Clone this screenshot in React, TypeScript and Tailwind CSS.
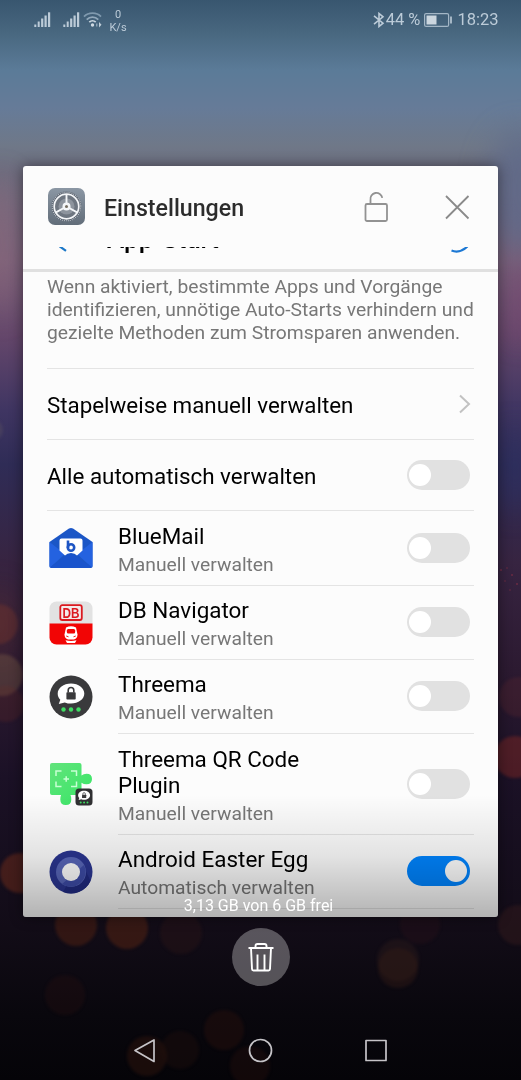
import React from "react";

const Wallpaper = () => (
    <svg
        className="absolute inset-0"
        width="521"
        height="1080"
        viewBox="0 0 521 1080"
    >
        <defs>
            <linearGradient id="sky" x1="0" y1="0" x2="0" y2="1">
                <stop offset="0" stopColor="#38566f" />
                <stop offset="0.03" stopColor="#48677f" />
                <stop offset="0.065" stopColor="#5b7b98" />
                <stop offset="0.1" stopColor="#667b98" />
                <stop offset="0.135" stopColor="#6f7888" />
                <stop offset="0.16" stopColor="#6d6c7e" />
                <stop offset="0.24" stopColor="#77617a" />
                <stop offset="0.31" stopColor="#65476b" />
                <stop offset="0.38" stopColor="#3f3562" />
                <stop offset="0.43" stopColor="#2f2c56" />
                <stop offset="0.52" stopColor="#372441" />
                <stop offset="0.62" stopColor="#2c1a31" />
                <stop offset="0.72" stopColor="#1b1126" />
                <stop offset="0.86" stopColor="#120c17" />
                <stop offset="0.94" stopColor="#09070d" />
                <stop offset="1" stopColor="#050408" />
            </linearGradient>
            <filter id="soft" x="-30%" y="-30%" width="160%" height="160%" colorInterpolationFilters="sRGB">
                <feGaussianBlur stdDeviation="1.8" />
            </filter>
            <filter id="haze" x="-100%" y="-100%" width="300%" height="300%" colorInterpolationFilters="sRGB">
                <feGaussianBlur stdDeviation="14" />
            </filter>
        </defs>
        <rect width="521" height="1080" fill="url(#sky)" />
        <g filter="url(#haze)">
            <ellipse cx="0" cy="245" rx="14" ry="70" fill="#96697a" opacity="0.5" />
            <ellipse cx="521" cy="190" rx="34" ry="60" fill="#5c6a8c" opacity="0.7" />
            <ellipse cx="521" cy="300" rx="14" ry="40" fill="#7c4470" opacity="0.5" />
            <ellipse cx="515" cy="470" rx="20" ry="40" fill="#2d3062" opacity="0.6" />
            <ellipse cx="0" cy="625" rx="14" ry="40" fill="#7a3a2c" opacity="0.3" />
        </g>
        <g filter="url(#soft)">
            <circle cx="-8" cy="430" r="11" fill="#5a5060" opacity="0.4" />
            <circle cx="-2" cy="624" r="20" fill="#8a3a28" opacity="0.3" />
            <circle cx="2" cy="675" r="21" fill="#806048" opacity="0.38" />
            <circle cx="6" cy="704" r="18" fill="#6c2a24" opacity="0.25" />
            <circle cx="20" cy="873" r="20" fill="#8a3519" opacity="0.4" />
            <circle cx="519" cy="697" r="20" fill="#6a2a30" opacity="0.25" />
            <circle cx="515" cy="757" r="21" fill="#8f2a24" opacity="0.42" />
            <circle cx="518" cy="925" r="20" fill="#3c1e1d" opacity="0.4" />
            <circle cx="76" cy="925" r="21" fill="#5f2511" opacity="0.42" />
            <circle cx="127" cy="928" r="21" fill="#5f2711" opacity="0.46" />
            <circle cx="181" cy="933" r="21" fill="#301618" opacity="0.35" />
            <circle cx="420" cy="924" r="20" fill="#2c1219" opacity="0.35" />
            <circle cx="398" cy="960" r="21" fill="#34201c" opacity="0.35" />
            <circle cx="398" cy="968" r="20" fill="#3c2018" opacity="0.35" />
            <circle cx="65" cy="995" r="20" fill="#2a1210" opacity="0.3" />
            <circle cx="224" cy="1030" r="20" fill="#2c110d" opacity="0.4" />
            <circle cx="147" cy="1056" r="20" fill="#34160d" opacity="0.45" />
            <circle cx="180" cy="1050" r="19" fill="#20100c" opacity="0.4" />
            <circle cx="250" cy="1066" r="20" fill="#26100c" opacity="0.4" />
        </g>
        <g fill="#a13548" opacity="0.5">
            <circle cx="501" cy="570" r="1" />
            <circle cx="507" cy="568" r="0.8" />
            <circle cx="512" cy="575" r="1" />
            <circle cx="505" cy="581" r="0.8" />
            <circle cx="517" cy="584" r="1" />
            <circle cx="510" cy="590" r="0.8" />
        </g>
    </svg>
);

const Signal = () => (
    <svg width="18" height="16" viewBox="0 0 18 16" fill="#bccbd8">
        <rect x="0.3" y="12.5" width="2" height="2.5" />
        <rect x="3.7" y="9.5" width="2" height="5.5" />
        <rect x="7.1" y="6.5" width="2.2" height="8.5" />
        <rect x="10.5" y="3.5" width="2.2" height="11.5" />
        <rect x="14" y="0.3" width="2.2" height="14.7" />
    </svg>
);

const Wifi = () => (
    <svg width="20" height="16" viewBox="0 0 20 16" fill="none" strokeWidth="1.8">
        <path d="M1 4.6C5.5 0 13.5 0 18 4.6" stroke="#7f99ae" />
        <path d="M3.7 7.6C7 4.3 12 4.3 15.3 7.6" stroke="#91a8bb" />
        <path d="M6.3 10.2C8.2 8.3 10.8 8.3 12.7 10.2" stroke="#c9d5df" />
        <circle cx="9.5" cy="13" r="1.7" fill="#d0dae3" />
        <path d="M13.8 11.5v3" stroke="#9db1c2" strokeWidth="1.2" />
        <path d="M16 10l2.5 2.7-2.5 2.7z" fill="#c0ced9" />
    </svg>
);

const StatusBar = () => (
    <div className="flex h-10 items-center justify-between pl-[34px] pr-[22.5px] text-[#bccbd8]">
        <div className="flex items-center">
            <Signal />
            <div className="ml-[11px]">
                <Signal />
            </div>
            <div className="ml-[2px]">
                <Wifi />
            </div>
            <div className="ml-[6px] w-[18px] pt-px text-center text-[11px] leading-[13px]">
                <p>0</p>
                <p>K/s</p>
            </div>
        </div>
        <div className="flex items-center text-[16.5px] leading-5">
            <svg width="12" height="16" viewBox="0 0 12 16" fill="none" stroke="#bccbd8" strokeWidth="1.6">
                <path d="M1 3.8l9 7.4-4 3.3V1.5l4 3.3-9 7.4" />
            </svg>
            <span className="ml-px">44 %</span>
            <svg className="ml-[4px]" width="29" height="14" viewBox="0 0 29 14">
                <rect x="0.6" y="0.6" width="24" height="12.8" rx="1.5" fill="none" stroke="#a3b6c6" strokeWidth="1.2" />
                <rect x="2.5" y="2.5" width="10" height="9" fill="#cbd6df" />
                <rect x="26.2" y="3.5" width="1.6" height="7" fill="#bccbd8" />
            </svg>
            <span className="ml-[4px]">18:23</span>
        </div>
    </div>
);

const SettingsIcon = () => (
    <svg width="37" height="37" viewBox="0 0 37 37" fill="none">
        <defs>
            <linearGradient id="set" x1="0" y1="0" x2="0" y2="1">
                <stop offset="0" stopColor="#8b97a4" />
                <stop offset="1" stopColor="#626d79" />
            </linearGradient>
        </defs>
        <rect width="37" height="37" rx="7" fill="url(#set)" />
        <circle cx="18.5" cy="18.5" r="15" fill="#59626e" />
        <circle cx="18.5" cy="18.5" r="14.3" stroke="#c3c9d0" strokeWidth="1.1" strokeDasharray="1 1" />
        <circle cx="18.5" cy="18.5" r="12.3" fill="#6e7680" stroke="#f4f6f8" strokeWidth="1.7" />
        <circle cx="18.5" cy="18.5" r="8" fill="#8d949d" />
        <path d="M18.5 18.5V6M18.5 18.5l-11 6.2M18.5 18.5l11 6.2" stroke="#f4f6f8" strokeWidth="1.9" />
        <circle cx="18.5" cy="18.5" r="4" fill="#f4f6f8" />
        <circle cx="18.5" cy="18.5" r="1.5" fill="#777063" />
    </svg>
);

const BlueMailIcon = () => (
    <svg width="44" height="44" viewBox="0 0 44 44">
        <path d="M0.5 16L20 2.6q2-1.3 4 0L43.5 16v24q0 2-2 2h-39q-2 0-2-2z" fill="#1b56c6" />
        <path d="M0.5 16L16 28 1 41.5q-.5-.5-.5-1.5zM43.5 16L28 28l15 13.5q.5-.5.5-1.5z" fill="#2462e0" />
        <path d="M1.2 41.3L18.5 29.5q3.5-2 7 0l17.3 11.8q-.6.7-1.6.7H2.6q-1 0-1.4-.7z" fill="#1a54cc" />
        <path d="M10.5 14.5q0-2 2-2h19q2 0 2 2v10l-5.5 5q-2-2.5-6-2.5t-6 2.5l-5.5-5z" fill="#fff" />
        <path d="M19 14.5v7.5" stroke="#1d55c4" strokeWidth="2.6" />
        <circle cx="22" cy="21.5" r="3.2" fill="none" stroke="#1d55c4" strokeWidth="2.6" />
    </svg>
);

const DbIcon = () => (
    <svg width="44" height="44" viewBox="0 0 44 44">
        <defs>
            <clipPath id="db">
                <rect x="0.5" y="0.5" width="43" height="43" rx="7" />
            </clipPath>
        </defs>
        <g clipPath="url(#db)">
            <rect width="44" height="23" fill="#e2e2e2" />
            <rect y="22.5" width="44" height="22" fill="#f20505" />
        </g>
        <rect x="11.3" y="4.2" width="21.5" height="14.8" rx="2" fill="#f4eaea" stroke="#db1a20" strokeWidth="1.8" />
        <text x="22" y="16.5" textAnchor="middle" fontFamily="Liberation Sans" fontWeight="700" fontSize="14" textLength="17" lengthAdjust="spacingAndGlyphs" fill="#db1a20">
            DB
        </text>
        <path d="M17 26.5q5-2.5 10 0l1.5 7q0 4-3.5 5h-6q-3.5-1-3.5-5z" fill="#fff" />
        <rect x="17.8" y="28" width="8.4" height="4.5" rx="1.5" fill="#f20505" />
        <path d="M17.2 35l2.3.8M26.8 35l-2.3.8" stroke="#f20505" strokeWidth="0.9" />
        <path d="M16.5 39.3q5.5 1.5 11 0l-1.5 2.7h-8z" fill="#fff" />
    </svg>
);

const ThreemaMark = () => (
    <>
        <path d="M22 8.5c-7.5 0-13.3 4.5-13.3 10.2 0 2.3 1 4.4 2.6 6L9.8 29l6-1.6c1.9.8 4 1.2 6.2 1.2 7.5 0 13.3-4.4 13.3-10S29.5 8.5 22 8.5z" fill="#fff" />
        <rect x="17.4" y="17.3" width="9.3" height="7.2" rx="0.8" fill="#3a3a3c" />
        <path d="M19.2 17.5v-2.2a2.8 2.8 0 0 1 5.6 0v2.2" fill="none" stroke="#3a3a3c" strokeWidth="1.6" />
        <g fill="#3fdc62">
            <circle cx="14.5" cy="34.5" r="2.2" />
            <circle cx="22" cy="34.5" r="2.2" />
            <circle cx="29.5" cy="34.5" r="2.2" />
        </g>
    </>
);

const ThreemaIcon = () => (
    <svg width="44" height="44" viewBox="0 0 44 44">
        <circle cx="22" cy="22" r="21.5" fill="#3a3a3c" />
        <ThreemaMark />
    </svg>
);

const PluginIcon = () => (
    <svg width="44" height="44" viewBox="0 0 44 44">
        <defs>
            <linearGradient id="plug" x1="0" y1="0" x2="1" y2="1">
                <stop offset="0" stopColor="#62e37c" />
                <stop offset="1" stopColor="#37e765" />
            </linearGradient>
        </defs>
        <path d="M3 1h27.5q2 0 2 2v10.5q2-1.8 5-1.8 5.5 0 5.5 5.3t-5.5 5.3q-3 0-5-1.5V33H21.5q.8 1.5.8 4.5 0 5.5-5.5 5.5t-5.5-5.5q0-3 .8-4.5H3q-2 0-2-2V3q0-2 2-2z" fill="url(#plug)" />
        <path d="M7 14V9h5.5M22 9h5.5v5M7 19.5v5h5.5M22 24.5h5.5v-5M17.2 14.3v5.5M14.5 17H20" fill="none" stroke="#c8ffd4" strokeWidth="1.5" />
        <rect x="26.5" y="26.5" width="17" height="17" rx="3.5" fill="#303032" />
        <g transform="translate(25.2 25) scale(0.45)">
            <ThreemaMark />
        </g>
    </svg>
);

const EggIcon = () => (
    <svg width="44" height="44" viewBox="0 0 44 44">
        <circle cx="22" cy="22" r="21.5" fill="#2a3590" />
        <path d="M32 11l9.5 20A21.5 21.5 0 0 1 14 42z" fill="#202a80" />
        <circle cx="22" cy="22" r="15" fill="#5866b8" />
        <path d="M35 15a15 15 0 0 1-22 19z" fill="#3d4ba6" />
        <circle cx="22" cy="22" r="9" fill="#fff" />
    </svg>
);

const Toggle = ({ on = false }: { on?: boolean }) => (
    <div
        className={`flex h-[30px] w-[63px] shrink-0 items-center rounded-full px-[2.5px] ${
            on ? "justify-end bg-[#0084ff]" : "bg-[#e1e1e1]"
        }`}
    >
        <div className="h-[22px] w-[22px] rounded-full bg-white" />
    </div>
);

const apps = [
    { name: "BlueMail", icon: <BlueMailIcon />, height: "h-[74.5px]", auto: false },
    { name: "DB Navigator", icon: <DbIcon />, height: "h-[74px]", auto: false },
    { name: "Threema", icon: <ThreemaIcon />, height: "h-[74.5px]", auto: false },
    { name: "Threema QR Code Plugin", icon: <PluginIcon />, height: "h-[100.5px]", auto: false },
    { name: "Android Easter Egg", icon: <EggIcon />, height: "h-[74px]", auto: true },
];

const TaskCard = () => (
    <div className="relative mx-[23px] mt-[126px] h-[751px] w-[475px] overflow-hidden rounded-[3px] bg-[#fcfcfc] shadow-[0_0_14px_rgba(0,0,0,0.45)]">
        <div className="flex h-[81px] items-center pl-[25px] pr-[28px]">
            <SettingsIcon />
            <h1 className="ml-[19px] flex-1 pt-[3px] text-[23.2px] font-medium text-[#2c2c2c]">
                Einstellungen
            </h1>
            <svg width="26" height="32" viewBox="0 0 26 32" fill="none" stroke="#929292" strokeWidth="1.8">
                <rect x="2.5" y="13" width="21.5" height="17" rx="1.5" />
                <path d="M7.5 12.5V9a6 6 0 0 1 11.8-2.2" />
            </svg>
            <svg className="ml-[55px]" width="26" height="26" viewBox="0 0 26 26" stroke="#8a8a8a" strokeWidth="1.8">
                <path d="M2 2l22.5 22.5M24.5 2L2 24.5" />
            </svg>
        </div>
        {/* toolbar of the app, scrolled under the task header */}
        <div className="flex h-[22px] items-start overflow-hidden pl-[36px] pr-[27px]">
            <svg className="-mt-[16px]" width="24" height="24" viewBox="0 0 24 24" fill="none" stroke="#1c78c8" strokeWidth="2.2">
                <path d="M12 1L-3.5 12.5l10.500 7.300" />
            </svg>
            <p className="-mt-[22px] ml-[24px] flex-1 text-[26px] font-medium leading-[28px] text-black">
                App-Start
            </p>
            <svg className="-mt-[20px]" width="28" height="28" viewBox="0 0 28 28" fill="none" stroke="#1c78d4" strokeWidth="2.2">
                <path d="M8.5 23.5Q16.5 26.8 24.5 19.5" />
            </svg>
        </div>
        <div className="h-[3px] bg-[#e0e0e0]" />
        <div className="px-[24px]">
            <p className="h-[96.5px] whitespace-nowrap border-b border-[#e4e4e4] pt-[4.4px] text-[19.28px] leading-[22.9px] text-[#777]">
                Wenn aktiviert, bestimmte Apps und Vorgänge
                <br />
                identifizieren, unnötige Auto-Starts verhindern und
                <br />
                gezielte Methoden zum Stromsparen anwenden.
            </p>
            <div className="flex h-[71px] items-center justify-between border-b border-[#e4e4e4] pr-[3px] text-[22.35px] text-black">
                <p className="pt-[4px]">Stapelweise manuell verwalten</p>
                <svg width="13" height="20" viewBox="0 0 13 20" fill="none" stroke="#c2c2c2" strokeWidth="2">
                    <path d="M2 1.5l9 8.5-9 8.500" />
                </svg>
            </div>
            <div className="flex h-[71.5px] items-center justify-between border-b border-[#e4e4e4] pr-[4.5px] text-[22.4px] text-black">
                <p className="pt-[4px]">Alle automatisch verwalten</p>
                <Toggle />
            </div>
            {apps.map((app) => (
                <div className={`flex ${app.height}`} key={app.name}>
                    <div className="flex w-[71px] shrink-0 items-center pl-[2px]">
                        {app.icon}
                    </div>
                    <div className="flex flex-1 items-center justify-between border-b border-[#e4e4e4] pr-[4.5px]">
                        <div className="w-[215px] pt-[4px]">
                            <p className="text-[22.45px] leading-[26px] text-black">{app.name}</p>
                            <p className="pt-[3px] text-[19.25px] leading-[25px] text-[#777]">
                                {app.auto ? "Automatisch verwalten" : "Manuell verwalten"}
                            </p>
                        </div>
                        <Toggle on={app.auto} />
                    </div>
                </div>
            ))}
        </div>
        <div className="absolute inset-x-0 bottom-0 flex h-[122px] items-end justify-center bg-linear-to-b from-black/0 via-black/10 to-black/29 pr-[4px]">
            <p className="text-[16px] leading-[23px] text-white">3,13 GB von 6 GB frei</p>
        </div>
    </div>
);

const NavBar = () => (
    <svg className="mt-[47px] ml-[130px]" width="262" height="36" viewBox="0 0 262 36" fill="none" stroke="#c6c4c8" strokeWidth="1.7" strokeLinejoin="round">
        <path d="M5 17.5L24 7v21.5z" />
        <circle cx="130.5" cy="17.5" r="11" />
        <rect x="236" y="7.5" width="20" height="20" />
    </svg>
);

export default function App() {
    return (
        <div className="relative h-[1080px] w-[521px] overflow-hidden bg-black font-[Roboto,sans-serif]">
            <Wallpaper />
            <div className="relative">
                <StatusBar />
                <TaskCard />
                <div className="mx-auto mt-[11px] flex h-[58px] w-[58px] items-center justify-center rounded-full bg-white/30">
                    <svg width="28" height="30" viewBox="0 0 28 30" fill="none" stroke="#fff" strokeWidth="1.9" strokeLinejoin="round">
                        <path d="M1.5 6h25M8.5 5.5V4q0-2 2-2h7q2 0 2 2v1.5M4 6l1 21q.1 1.5 1.5 1.5h15q1.4 0 1.5-1.5L24 6M10.5 12.5V28M17.5 12.5V28" />
                    </svg>
                </div>
                <NavBar />
            </div>
        </div>
    );
}
